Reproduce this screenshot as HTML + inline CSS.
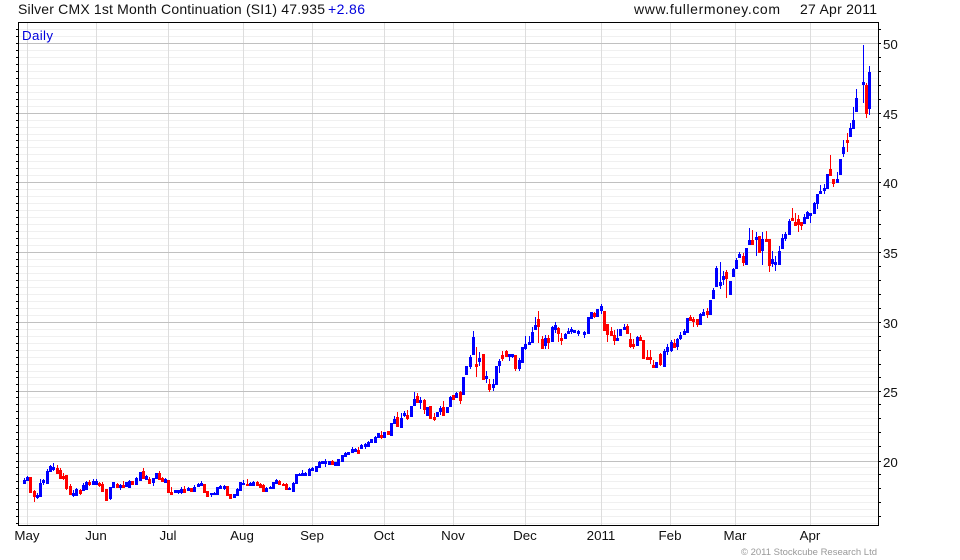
<!DOCTYPE html>
<html><head><meta charset="utf-8"><style>
html,body{margin:0;padding:0;background:#fff;width:960px;height:560px;overflow:hidden}
svg{display:block}
text{font-family:"Liberation Sans",sans-serif;font-size:13.33px;fill:#111}
.t{font-size:14px}
</style></head><body>
<svg width="960" height="560" viewBox="0 0 960 560" xmlns="http://www.w3.org/2000/svg">
<g shape-rendering="crispEdges" fill="none">
<path stroke="#f0f0f0" d="M19 29.5H878M19 36.5H878M19 50.5H878M19 57.5H878M19 64.5H878M19 71.5H878M19 78.5H878M19 85.5H878M19 92.5H878M19 99.5H878M19 106.5H878M19 120.5H878M19 127.5H878M19 134.5H878M19 140.5H878M19 147.5H878M19 154.5H878M19 161.5H878M19 168.5H878M19 175.5H878M19 189.5H878M19 196.5H878M19 203.5H878M19 210.5H878M19 217.5H878M19 224.5H878M19 231.5H878M19 238.5H878M19 245.5H878M19 259.5H878M19 266.5H878M19 273.5H878M19 280.5H878M19 287.5H878M19 294.5H878M19 301.5H878M19 308.5H878M19 315.5H878M19 329.5H878M19 336.5H878M19 343.5H878M19 350.5H878M19 357.5H878M19 364.5H878M19 371.5H878M19 377.5H878M19 384.5H878M19 397.5H878M19 404.5H878M19 411.5H878M19 418.5H878M19 425.5H878M19 432.5H878M19 439.5H878M19 446.5H878M19 453.5H878M19 467.5H878M19 474.5H878M19 481.5H878M19 488.5H878M19 495.5H878M19 502.5H878M19 509.5H878M19 516.5H878M19 523.5H878"/>
<path stroke="#dddddd" d="M27.5 23V525M96.5 23V525M168.5 23V525M243.5 23V525M312.5 23V525M384.5 23V525M453.5 23V525M525.5 23V525M601.5 23V525M670.5 23V525M735.5 23V525M810.5 23V525"/>
<path stroke="#c0c0c0" d="M19 43.5H878M19 113.5H878M19 182.5H878M19 252.5H878M19 322.5H878M19 391.5H878M19 461.5H878"/>
<path stroke="#000" d="M16 29.5H18M16 36.5H18M16 43.5H18M16 50.5H18M16 57.5H18M16 64.5H18M16 71.5H18M16 78.5H18M16 85.5H18M16 92.5H18M16 99.5H18M16 106.5H18M16 113.5H18M16 120.5H18M16 127.5H18M16 134.5H18M16 140.5H18M16 147.5H18M16 154.5H18M16 161.5H18M16 168.5H18M16 175.5H18M16 182.5H18M16 189.5H18M16 196.5H18M16 203.5H18M16 210.5H18M16 217.5H18M16 224.5H18M16 231.5H18M16 238.5H18M16 245.5H18M16 252.5H18M16 259.5H18M16 266.5H18M16 273.5H18M16 280.5H18M16 287.5H18M16 294.5H18M16 301.5H18M16 308.5H18M16 315.5H18M16 322.5H18M16 329.5H18M16 336.5H18M16 343.5H18M16 350.5H18M16 357.5H18M16 364.5H18M16 371.5H18M16 377.5H18M16 384.5H18M16 391.5H18M16 397.5H18M16 404.5H18M16 411.5H18M16 418.5H18M16 425.5H18M16 432.5H18M16 439.5H18M16 446.5H18M16 453.5H18M16 461.5H18M16 467.5H18M16 474.5H18M16 481.5H18M16 488.5H18M16 495.5H18M16 502.5H18M16 509.5H18M16 516.5H18M16 523.5H18"/>
<path stroke="#000" d="M879 29.5H881M879 43.5H881M879 57.5H881M879 71.5H881M879 85.5H881M879 99.5H881M879 113.5H881M879 127.5H881M879 140.5H881M879 154.5H881M879 168.5H881M879 182.5H881M879 196.5H881M879 210.5H881M879 224.5H881M879 238.5H881M879 252.5H881M879 266.5H881M879 280.5H881M879 294.5H881M879 308.5H881M879 322.5H881M879 336.5H881M879 350.5H881M879 364.5H881M879 377.5H881M879 391.5H881M879 404.5H881M879 418.5H881M879 432.5H881M879 446.5H881M879 461.5H881M879 474.5H881M879 488.5H881M879 502.5H881M879 516.5H881"/>
<path stroke="#0000ff" d="M24.5 478V483M27.5 476V481M37.5 493V499M40.5 479V496M43.5 479V485M47.5 469V483M50.5 465V472M53.5 463V471M73.5 490V497M76.5 488V495M83.5 483V490M86.5 481V490M93.5 479V485M96.5 479V485M110.5 487V500M120.5 484V490M129.5 480V487M136.5 477V484M146.5 475V480M153.5 478V486M165.5 478V482M178.5 490V494M181.5 487V494M188.5 487V491M194.5 485V492M198.5 483V487M201.5 481V486M211.5 493V497M214.5 492V495M220.5 485V488M224.5 485V490M237.5 488V495M243.5 480V485M250.5 482V486M253.5 481V485M266.5 487V491M270.5 486V489M276.5 479V484M289.5 487V490M293.5 482V492M299.5 473V476M302.5 470V476M305.5 472V476M309.5 468V476M312.5 467V470M316.5 466V472M319.5 461V467M325.5 459V467M345.5 452V457M348.5 452V455M352.5 447V453M355.5 448V452M361.5 444V449M365.5 443V449M368.5 441V447M375.5 436V442M394.5 416V423M401.5 413V428M404.5 411V417M414.5 392V406M420.5 397V409M440.5 406V415M450.5 396V406M456.5 392V397M470.5 355V369M473.5 331V354M479.5 352V366M486.5 371V383M493.5 379V391M499.5 359V373M509.5 354V361M512.5 354V358M519.5 358V371M525.5 336V350M529.5 336V344M532.5 327V342M535.5 317V329M545.5 335V349M552.5 326V342M555.5 322V333M565.5 333V338M568.5 328V334M571.5 327V334M578.5 330V336M584.5 331V338M601.5 304V314M617.5 329V341M624.5 324V329M637.5 336V345M656.5 362V368M664.5 349V367M667.5 344V355M671.5 340V352M677.5 338V350M680.5 332V340M684.5 329V334M700.5 313V325M703.5 309V315M713.5 288V298M716.5 266V286M720.5 262V289M723.5 271V285M733.5 268V276M736.5 258V269M739.5 252V257M749.5 228V244M756.5 232V256M762.5 232V265M772.5 251V267M775.5 256V271M779.5 246V264M782.5 234V248M785.5 232V241M789.5 219V234M804.5 214V223M807.5 211V218M810.5 213V223M814.5 202V213M817.5 194V209M820.5 185V193M824.5 184V194M837.5 172V182M843.5 140V157M850.5 123V136M853.5 107V128M856.5 89V112M863.5 45V103M869.5 66V115"/>
<path stroke="#ff0000" d="M34.5 490V502M57.5 465V474M60.5 468V478M63.5 473V480M66.5 475V490M70.5 484V495M80.5 489V495M89.5 480V486M99.5 482V487M102.5 482V491M117.5 483V488M123.5 481V488M143.5 468V478M149.5 477V483M159.5 471V480M162.5 477V482M171.5 487V494M184.5 486V493M204.5 484V493M207.5 491V497M247.5 479V485M257.5 481V486M260.5 483V488M263.5 484V492M279.5 480V485M283.5 483V485M286.5 483V489M332.5 460V465M358.5 447V454M381.5 431V439M397.5 412V427M407.5 410V420M417.5 393V403M424.5 399V414M430.5 406V419M434.5 413V421M443.5 401V415M460.5 391V404M476.5 347V377M483.5 354V380M489.5 379V392M502.5 351V361M506.5 350V356M515.5 355V371M538.5 311V343M542.5 336V349M548.5 335V349M558.5 327V342M561.5 333V345M594.5 312V318M607.5 324V342M611.5 327V335M614.5 330V345M627.5 324V333M630.5 333V348M633.5 339V349M640.5 335V340M647.5 350V359M650.5 350V364M653.5 360V368M660.5 353V366M674.5 339V347M690.5 315V320M693.5 317V327M697.5 319V327M707.5 308V318M726.5 270V298M743.5 253V266M752.5 230V244M766.5 231V241M769.5 239V272M792.5 208V220M795.5 213V225M798.5 215V232M801.5 222V230M830.5 155V175M833.5 179V187M847.5 133V152M866.5 83V118"/>
<path id="bb" stroke="#0000ff" stroke-width="3" d="M24.5 480V483M27.5 477V480M37.5 495V497M40.5 483V496M43.5 480V482M47.5 471V483M50.5 466V471M53.5 467V469M73.5 493V495M76.5 489V495M83.5 485V490M86.5 482V489M93.5 481V484M96.5 481V484M110.5 487V498M113.5 482V487M120.5 485V487M126.5 482V486M129.5 481V487M136.5 478V484M140.5 472V480M146.5 476V479M153.5 478V482M156.5 473V478M165.5 479V482M175.5 490V492M178.5 490V492M181.5 489V492M188.5 488V490M194.5 487V491M198.5 484V486M201.5 483V485M211.5 493V494M214.5 493V494M217.5 487V494M220.5 486V488M224.5 486V488M234.5 494V497M237.5 489V495M240.5 482V490M243.5 483V484M250.5 483V485M253.5 482V485M266.5 488V491M270.5 487V488M273.5 482V488M276.5 480V483M289.5 488V489M293.5 483V491M296.5 474V483M299.5 474V475M302.5 473V475M305.5 473V475M309.5 469V475M312.5 468V470M316.5 466V471M319.5 462V467M322.5 461V463M325.5 461V463M329.5 461V464M335.5 462V465M338.5 459V465M342.5 455V461M345.5 453V456M348.5 452V454M352.5 449V452M355.5 449V451M361.5 445V448M365.5 444V446M368.5 442V446M371.5 439V442M375.5 437V442M378.5 433V437M384.5 432V437M391.5 423V435M394.5 419V423M401.5 418V427M404.5 413V415M411.5 406V416M414.5 399V405M420.5 400V402M427.5 407V415M437.5 412V416M440.5 408V411M447.5 407V412M450.5 397V406M456.5 393V397M463.5 377V394M466.5 366V374M470.5 357V366M473.5 337V354M479.5 358V361M486.5 376V378M493.5 384V387M496.5 366V384M499.5 361V365M509.5 354V356M512.5 354V356M519.5 360V368M522.5 347V362M525.5 344V348M529.5 342V344M532.5 332V342M535.5 325V329M545.5 338V345M552.5 327V341M555.5 325V329M565.5 334V338M568.5 331V333M571.5 329V331M574.5 330V332M578.5 331V333M584.5 332V334M588.5 317V333M591.5 312V318M597.5 309V316M601.5 306V310M617.5 338V340M620.5 329V335M624.5 327V329M637.5 337V345M656.5 362V367M664.5 351V366M667.5 347V351M671.5 342V350M677.5 339V346M680.5 335V338M684.5 331V334M687.5 318V332M700.5 314V324M703.5 312V315M710.5 300V314M713.5 290V298M716.5 268V286M720.5 282V285M723.5 276V279M730.5 281V294M733.5 269V276M736.5 260V268M739.5 254V257M746.5 248V264M749.5 240V244M756.5 237V239M762.5 239V250M772.5 259V263M775.5 262V264M779.5 251V264M782.5 238V248M785.5 234V238M789.5 221V234M804.5 217V223M807.5 212V218M810.5 213V215M814.5 203V213M817.5 194V203M820.5 191V193M824.5 188V190M827.5 174V188M837.5 179V182M840.5 159V174M843.5 147V153M850.5 128V136M853.5 120V128M856.5 98V111M863.5 82V84M869.5 72V108"/>
<use href="#bb" y="1"/>
<path id="rb" stroke="#ff0000" stroke-width="3" d="M30.5 477V492M34.5 491V496M57.5 468V473M60.5 470V478M63.5 476V478M66.5 475V488M70.5 486V494M80.5 490V493M89.5 482V484M99.5 483V485M102.5 484V491M106.5 489V500M117.5 484V487M123.5 485V487M132.5 481V484M143.5 471V478M149.5 479V483M159.5 473V479M162.5 478V481M168.5 480V492M171.5 492V494M184.5 489V492M191.5 488V491M204.5 484V492M207.5 491V496M227.5 486V495M230.5 494V498M247.5 484V485M257.5 482V485M260.5 484V487M263.5 485V491M279.5 481V484M283.5 484V485M286.5 484V489M332.5 461V464M358.5 450V453M381.5 435V437M388.5 431V434M397.5 417V426M407.5 415V418M417.5 396V402M424.5 400V409M430.5 406V418M434.5 417V419M443.5 407V415M453.5 395V399M460.5 392V400M476.5 364V366M483.5 354V379M489.5 384V389M502.5 355V358M506.5 351V356M515.5 355V368M538.5 319V326M542.5 339V348M548.5 338V342M558.5 328V333M561.5 338V340M594.5 313V316M604.5 311V330M607.5 324V334M611.5 331V335M614.5 335V340M627.5 326V333M630.5 339V346M633.5 344V346M640.5 337V340M643.5 340V358M647.5 357V359M650.5 357V359M653.5 365V367M660.5 354V364M674.5 343V347M690.5 317V320M693.5 319V321M697.5 319V324M707.5 311V314M726.5 272V278M743.5 256V262M752.5 240V244M759.5 236V252M766.5 239V241M769.5 239V265M792.5 218V220M795.5 222V225M798.5 219V224M801.5 222V225M830.5 169V175M833.5 179V183M847.5 140V142M866.5 85V113"/>
<use href="#rb" y="1"/>
<rect x="18.5" y="22.5" width="860" height="503" stroke="#000"/>
</g>
<text class="t" x="18" y="14" textLength="307">Silver CMX 1st Month Continuation (SI1) 47.935</text>
<text class="t" x="328" y="14" textLength="37" style="fill:#0000dd">+2.86</text>
<text class="t" x="634" y="14" textLength="146">www.fullermoney.com</text>
<text class="t" x="800" y="14" textLength="77">27 Apr 2011</text>
<text x="22" y="40" textLength="31" style="fill:#0000dd">Daily</text>
<text x="883" y="49">50</text>
<text x="883" y="119">45</text>
<text x="883" y="188">40</text>
<text x="883" y="258">35</text>
<text x="883" y="328">30</text>
<text x="883" y="397">25</text>
<text x="883" y="467">20</text>
<g text-anchor="middle">
<text x="27" y="540">May</text>
<text x="96" y="540">Jun</text>
<text x="168" y="540">Jul</text>
<text x="242" y="540">Aug</text>
<text x="312" y="540">Sep</text>
<text x="384" y="540">Oct</text>
<text x="453" y="540">Nov</text>
<text x="525" y="540">Dec</text>
<text x="601" y="540">2011</text>
<text x="670" y="540">Feb</text>
<text x="735" y="540">Mar</text>
<text x="810" y="540">Apr</text>
</g>
<text x="741" y="555" textLength="136" style="font-size:9.5px;fill:#999">© 2011 Stockcube Research Ltd</text>
</svg>
</body></html>
